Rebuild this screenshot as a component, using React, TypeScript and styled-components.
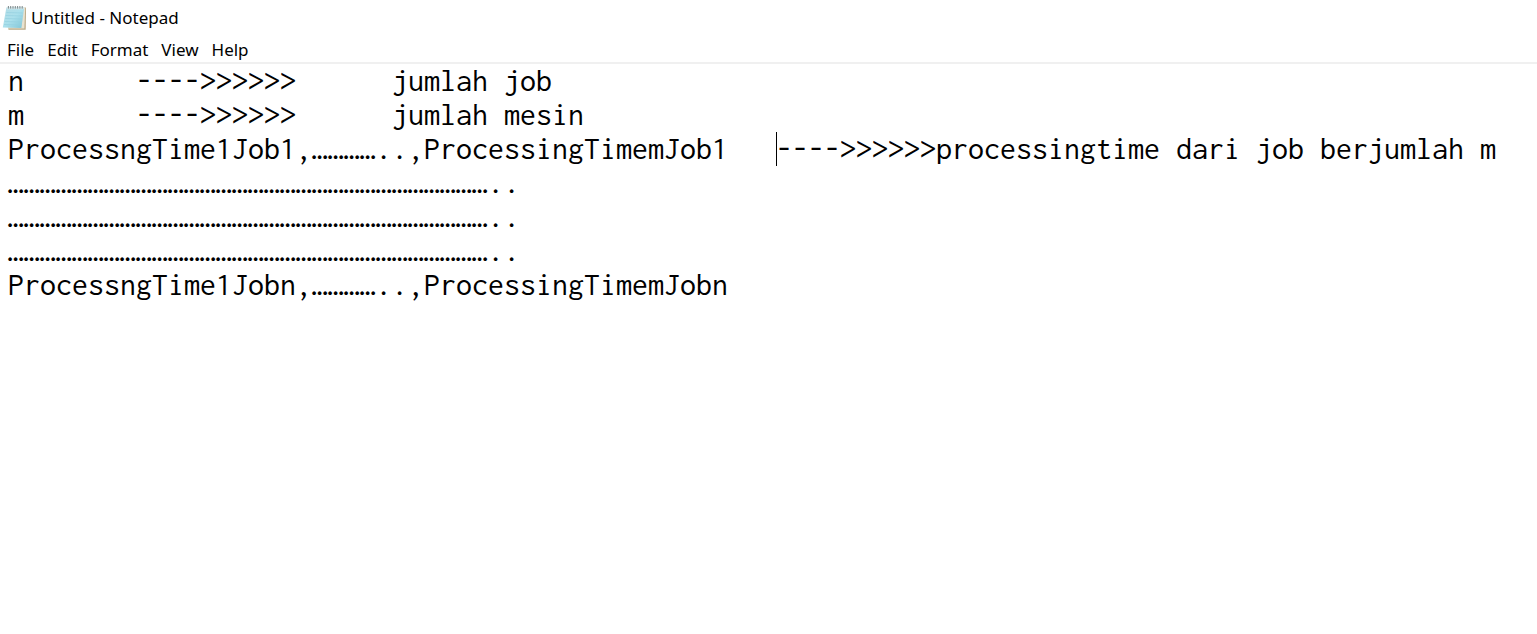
import React from 'react';
import styled, { createGlobalStyle } from 'styled-components';

const GlobalStyle = createGlobalStyle`
  * { box-sizing: border-box; }
  body { margin: 0; background: #fff; color: #000; }
`;

const uiFont = '"Segoe UI", "Noto Sans", "Open Sans", sans-serif';
const editorFont = 'Consolas, Inconsolata, "DejaVu Sans Mono", monospace';

const Window = styled.div`
  display: flex;
  flex-direction: column;
  min-height: 100vh;
  font-family: ${uiFont};
  font-size: 17px;
`;

const TitleBar = styled.header`
  display: flex;
  align-items: center;
  gap: 4px;
  height: 36px;
  padding-left: 2px;
`;

const Title = styled.h1`
  margin: 0;
  font-size: 17px;
  font-weight: 400;
  line-height: 24px;
`;

const MenuBar = styled.nav`
  display: flex;
  align-items: center;
  gap: 13px;
  height: 28px;
  padding: 2px 0 0 7px;
  border-bottom: 2px solid #f0f0f0;
`;

const MenuButton = styled.button`
  padding: 0;
  border: 0;
  background: transparent;
  color: inherit;
  font: inherit;
  line-height: 24px;
`;

const Editor = styled.main`
  position: relative;
  display: flex;
  flex: 1;
`;

const TextArea = styled.textarea`
  flex: 1;
  min-width: 0;
  margin: 0;
  padding: 0 8px;
  border: 0;
  outline: 0;
  resize: none;
  overflow: hidden;
  background: transparent;
  color: inherit;
  font-family: ${editorFont};
  font-size: 32px;
  line-height: 34px;
  white-space: pre;
  tab-size: 128px;
`;

const Caret = styled.span<{ $line: number; $column: number }>`
  position: absolute;
  top: ${({ $line }) => $line * 34}px;
  left: ${({ $column }) => 8 + $column * 16}px;
  width: 1px;
  height: 34px;
  background: #000;
  pointer-events: none;
`;

const NotepadIcon = () => (
  <svg width="25" height="26" viewBox="0 0 25 26" aria-hidden="true">
    <defs>
      <linearGradient id="page" x1="0" y1="0" x2="1" y2="1">
        <stop offset="0" stopColor="#b4dce6" />
        <stop offset="0.5" stopColor="#abe0ec" />
        <stop offset="1" stopColor="#7fc4d6" />
      </linearGradient>
    </defs>
    <path d="M6 5 L24 2.5 L23.7 24.8 L6.5 24.8 L6 22 Z" fill="#b9a885" />
    <path d="M6 3 L23.2 2.5 L22.4 23.6 L6 23.6 Z" fill="#e9e2cf" />
    <path d="M4.4 2.4 L22.2 2.4 L19.4 23 L0.8 22.4 Z" fill="url(#page)" />
    <path
      d="M4.4 7.5 L20.8 8 M3.8 10.5 L20.4 11 M3.2 13.5 L20 14 M2.6 16.5 L19.7 17 M2 19.5 L19.4 20"
      stroke="#93d0df"
      strokeWidth="0.7"
    />
    <path d="M4.8 3.4 L22 3.4" stroke="#d3e6ea" strokeWidth="1.8" />
    <path
      d="M6.4 3.6 V1 M8.7 3.6 V1 M11 3.6 V1 M13.3 3.6 V1 M15.6 3.6 V1 M17.9 3.6 V1 M20.2 3.6 V1"
      stroke="#7c8688"
      strokeWidth="1"
    />
  </svg>
);

const menus = ['File', 'Edit', 'Format', 'View', 'Help'];

const dottedLine = '…'.repeat(30) + '..';

const content = [
  'n\t---->>>>>>\tjumlah job',
  'm\t---->>>>>>\tjumlah mesin',
  'ProcessngTime1Job1,…………..,ProcessingTimemJob1\t---->>>>>>processingtime dari job berjumlah m',
  dottedLine,
  dottedLine,
  dottedLine,
  'ProcessngTime1Jobn,…………..,ProcessingTimemJobn',
].join('\n');

export default function App() {
  return (
    <Window>
      <GlobalStyle />
      <TitleBar>
        <NotepadIcon />
        <Title>Untitled - Notepad</Title>
      </TitleBar>
      <MenuBar aria-label="Menu">
        {menus.map((menu) => (
          <MenuButton key={menu} type="button">{menu}</MenuButton>
        ))}
      </MenuBar>
      <Editor>
        <TextArea aria-label="Text editor" defaultValue={content} spellCheck={false} />
        <Caret $line={2} $column={48} />
      </Editor>
    </Window>
  );
}
